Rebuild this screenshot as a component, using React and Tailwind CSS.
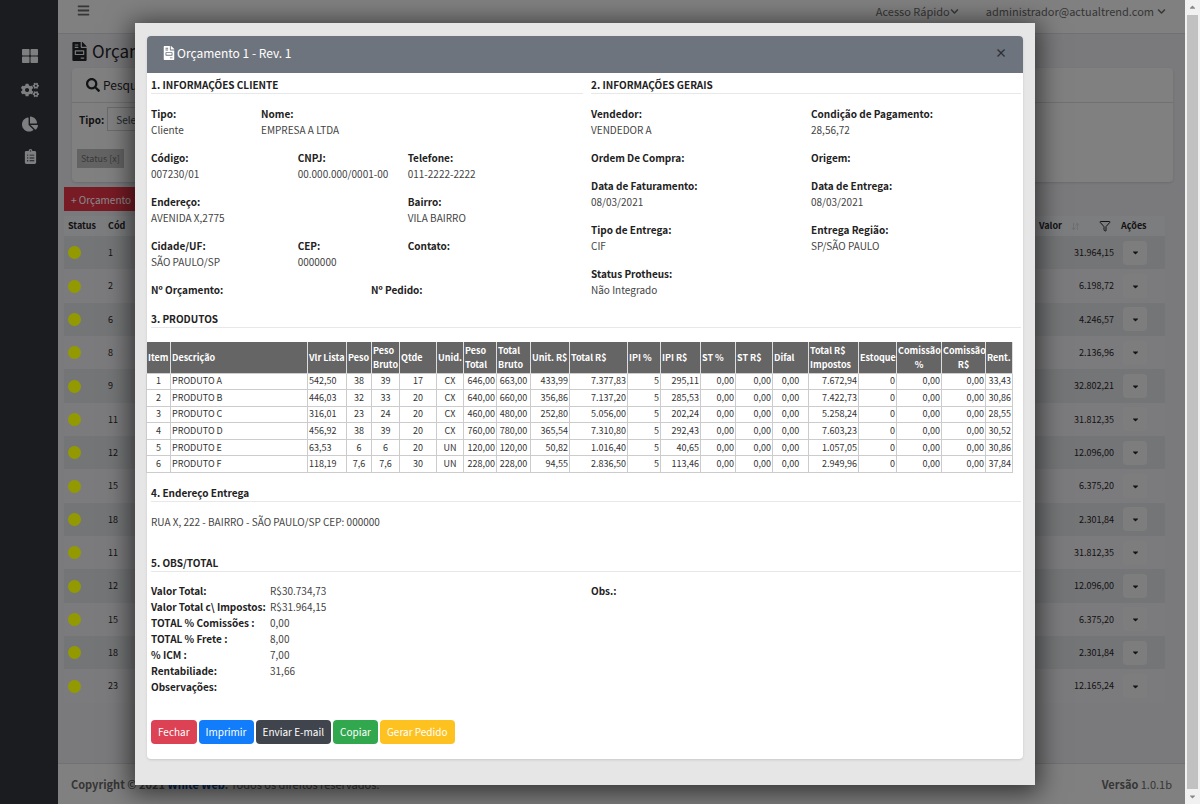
import React from 'react';
import { FaBars, FaChartPie, FaChevronDown, FaClipboardList, FaCogs, FaFileInvoice, FaCaretDown, FaSearch, FaThLarge } from 'react-icons/fa';
import { ArrowDownUp, Filter } from 'lucide-react';

const orcamentos = [
  { cod: 1, valor: '31.964,15' },
  { cod: 2, valor: '6.198,72' },
  { cod: 6, valor: '4.246,57' },
  { cod: 8, valor: '2.136,96' },
  { cod: 9, valor: '32.802,21' },
  { cod: 11, valor: '31.812,35' },
  { cod: 12, valor: '12.096,00' },
  { cod: 15, valor: '6.375,20' },
  { cod: 18, valor: '2.301,84' },
  { cod: 11, valor: '31.812,35' },
  { cod: 12, valor: '12.096,00' },
  { cod: 15, valor: '6.375,20' },
  { cod: 18, valor: '2.301,84' },
  { cod: 23, valor: '12.165,24' },
];

const colunas = [
  { nome: 'Item', col: 'w-[24px]', td: 'text-center' },
  { nome: 'Descrição', col: 'w-[137px]', td: 'text-left' },
  { nome: 'Vlr Lista', col: 'w-[39px]', td: 'text-left' },
  { nome: 'Peso', col: 'w-[25px]', td: 'text-center' },
  { nome: 'Peso Bruto', col: 'w-[28px]', td: 'text-center' },
  { nome: 'Qtde', col: 'w-[37px]', td: 'text-center' },
  { nome: 'Unid.', col: 'w-[27px]', td: 'text-center' },
  { nome: 'Peso Total', col: 'w-[33px]', td: 'text-right' },
  { nome: 'Total Bruto', col: 'w-[34px]', td: 'text-center' },
  { nome: 'Unit. R$', col: 'w-[39px]', td: 'text-right' },
  { nome: 'Total R$', col: 'w-[58px]', td: 'text-right' },
  { nome: 'IPI %', col: 'w-[33px]', td: 'text-right' },
  { nome: 'IPI R$', col: 'w-[40px]', td: 'text-right' },
  { nome: 'ST %', col: 'w-[35px]', td: 'text-right' },
  { nome: 'ST R$', col: 'w-[37px]', td: 'text-right' },
  { nome: 'Difal', col: 'w-[36px]', td: 'text-center' },
  { nome: 'Total R$ Impostos', col: 'w-[50px]', td: 'text-right' },
  { nome: 'Estoque', col: 'w-[38px]', td: 'text-right' },
  { nome: 'Comissão %', col: 'w-[45px]', td: 'text-right', centro: true },
  { nome: 'Comissão R$', col: 'w-[44px]', td: 'text-right', centro: true },
  { nome: 'Rent.', col: 'w-[27px]', td: 'text-right' },
];

const produtos = [
  ['1', 'PRODUTO A', '542,50', '38', '39', '17', 'CX', '646,00', '663,00', '433,99', '7.377,83', '5', '295,11', '0,00', '0,00', '0,00', '7.672,94', '0', '0,00', '0,00', '33,43'],
  ['2', 'PRODUTO B', '446,03', '32', '33', '20', 'CX', '640,00', '660,00', '356,86', '7.137,20', '5', '285,53', '0,00', '0,00', '0,00', '7.422,73', '0', '0,00', '0,00', '30,86'],
  ['3', 'PRODUTO C', '316,01', '23', '24', '20', 'CX', '460,00', '480,00', '252,80', '5.056,00', '5', '202,24', '0,00', '0,00', '0,00', '5.258,24', '0', '0,00', '0,00', '28,55'],
  ['4', 'PRODUTO D', '456,92', '38', '39', '20', 'CX', '760,00', '780,00', '365,54', '7.310,80', '5', '292,43', '0,00', '0,00', '0,00', '7.603,23', '0', '0,00', '0,00', '30,52'],
  ['5', 'PRODUTO E', '63,53', '6', '6', '20', 'UN', '120,00', '120,00', '50,82', '1.016,40', '5', '40,65', '0,00', '0,00', '0,00', '1.057,05', '0', '0,00', '0,00', '30,86'],
  ['6', 'PRODUTO F', '118,19', '7,6', '7,6', '30', 'UN', '228,00', '228,00', '94,55', '2.836,50', '5', '113,46', '0,00', '0,00', '0,00', '2.949,96', '0', '0,00', '0,00', '37,84'],
];

const totais = [
  ['Valor Total:', 'R$30.734,73'],
  ['Valor Total c\\ Impostos:', 'R$31.964,15'],
  ['TOTAL % Comissões :', '0,00'],
  ['TOTAL % Frete :', '8,00'],
  ['% ICM :', '7,00'],
  ['Rentabiliade:', '31,66'],
  ['Observações:', ''],
];

const Campo = ({ label, valor, className = '' }) => (
  <div className={className}>
    <p className="font-bold">{label}</p>
    {valor && <p className="text-[#444]">{valor}</p>}
  </div>
);

const Titulo = ({ children }) => (
  <h2 className="h-5 border-b border-[#e6e8ea] pt-px font-bold leading-[20px]">{children}</h2>
);

const Sidebar = () => (
  <nav className="flex w-[58px] shrink-0 flex-col items-center gap-[17px] bg-[#2d3035] pt-12 pl-[2px] text-[#d2d4d8]">
    <a href="#painel" aria-label="Painel"><FaThLarge size={16} /></a>
    <a href="#cadastros" aria-label="Cadastros"><FaCogs size={18} /></a>
    <a href="#relatorios" aria-label="Relatórios"><FaChartPie size={16} /></a>
    <a href="#pedidos" aria-label="Pedidos"><FaClipboardList size={15} /></a>
  </nav>
);

const Pagina = () => (
  <div className="flex min-w-0 flex-1 flex-col bg-[#cbcccf] text-[#1d2023]">
    <header className="flex h-[34px] shrink-0 items-start justify-between border-b border-[#bbbdc0] bg-[#d5d5d5] pt-[3px] pr-[19px] pl-[19px] text-[11px] leading-[16px] text-[#5a5a5a]">
      <button aria-label="Menu" className="pt-px"><FaBars size={13} /></button>
      <div className="flex gap-[27px]">
        <button className="flex items-center">Acesso Rápido<FaChevronDown size={9} /></button>
        <button className="flex items-center gap-[3px]">administrador@actualtrend.com <FaChevronDown size={9} /></button>
      </div>
    </header>

    <main className="flex-1 overflow-hidden">
      <h1 className="flex h-[34px] items-center gap-[3px] pl-3 text-[17px]">
        <FaFileInvoice size={19} />Orçamentos
      </h1>
      <section className="mr-3 ml-[14px] rounded-sm bg-[#d5d5d5] shadow">
        <h2 className="flex h-[35px] items-center gap-[3px] border-b border-[#bbbdc0] pl-[14px] text-[12px]">
          <FaSearch size={14} />Pesquisa
        </h2>
        <div className="flex h-[79px] flex-col items-start gap-[18px] pt-1 pl-[5px] text-[10px]">
          <div className="flex items-center gap-[3px] pl-[2px]">
            <label htmlFor="tipo" className="font-bold">Tipo:</label>
            <select id="tipo" className="h-6 w-[120px] appearance-none border border-[#b0b4b8] pl-2 text-[#3d444a]">
              <option>Selecione</option>
            </select>
          </div>
          <button className="h-[19px] bg-[#a6a6a6] px-1 text-[9px] leading-[19px] text-[#606060]">Status [x]</button>
        </div>
      </section>

      <div className="pt-[5px] pr-5 pl-[6px]">
        <button className="block h-6 bg-[#c92d3e] px-[7px] text-[10px] text-[#e4e4e4]">+ Orçamento</button>
        <table className="mt-[5px] h-[487px] w-full text-[9px]">
          <thead>
            <tr className="h-5 bg-[#cfd0d2] text-left">
              <th className="w-[44px] pl-1">Status</th>
              <th>Cód</th>
              <th className="w-[60px]">
                <span className="flex items-center gap-[9px]">Valor <ArrowDownUp size={9} className="text-[#b0b0b0]" /></span>
              </th>
              <th className="w-[22px]"><Filter size={12} /></th>
              <th className="w-[44px]">Ações</th>
            </tr>
          </thead>
          <tbody>
            {orcamentos.map((o, i) => (
              <tr key={i} className="odd:bg-[#c2c3c5] even:bg-[#cdced0]">
                <td className="pl-1"><div className="size-[13px] rounded-full bg-[#f6ff00]" /></td>
                <td>{o.cod}</td>
                <td colSpan={2} className="pr-[7px] text-right">{o.valor}</td>
                <td>
                  <button aria-label="Ações" className="ml-[2px] flex size-6 items-center justify-center rounded-sm bg-[#d0d1d2]">
                    <FaCaretDown size={9} />
                  </button>
                </td>
              </tr>
            ))}
          </tbody>
        </table>
      </div>
    </main>

    <footer className="flex h-[41px] shrink-0 items-center justify-between border-t border-[#bbbdc0] bg-[#d5d5d5] pr-[13px] pl-[13px] text-[11px] text-[#5a5a5a]">
      <p><b>Copyright © 2021 <a href="#whiteweb" className="text-[#003e8c]">White Web</a>.</b> Todos os direitos reservados.</p>
      <p><b>Versão</b> 1.0.1b</p>
    </footer>
  </div>
);

const Modal = () => (
  <div role="dialog" aria-label="Orçamento 1 - Rev. 1" className="w-full max-w-[900px] bg-[#e6e6e6] px-3 pt-[13px] pb-[26px] shadow-[0_4px_24px_4px_rgba(0,0,0,0.6)]">
    <div className="rounded bg-white pb-[15px] text-[10px] leading-[16px] text-[#222] shadow-sm">
      <header className="flex h-[37px] items-center justify-between rounded-t bg-[#6e747e] pr-4 pb-[3px] pl-[15px] text-white">
        <h1 className="flex items-center gap-px text-[12px]"><FaFileInvoice size={14} />Orçamento 1 - Rev. 1</h1>
        <button aria-label="Fechar" className="text-[12px] font-bold text-[#2b2f33]">×</button>
      </header>

      <div className="-mr-1 grid grid-cols-2 pt-px">
        <section className="px-1">
          <Titulo>1. INFORMAÇÕES CLIENTE</Titulo>
          <div className="mt-3 -mr-1 -ml-1 grid grid-cols-12 gap-y-3">
            <Campo className="col-span-3 pl-1" label="Tipo:" valor="Cliente" />
            <Campo className="col-span-9 pl-1" label="Nome:" valor="EMPRESA A LTDA" />
            <Campo className="col-span-4 pl-1" label="Código:" valor="007230/01" />
            <Campo className="col-span-3 pl-1" label="CNPJ:" valor="00.000.000/0001-00" />
            <Campo className="col-span-5 pl-1" label="Telefone:" valor="011-2222-2222" />
            <Campo className="col-span-7 pl-1" label="Endereço:" valor="AVENIDA X,2775" />
            <Campo className="col-span-5 pl-1" label="Bairro:" valor="VILA BAIRRO" />
            <Campo className="col-span-4 pl-1" label="Cidade/UF:" valor="SÃO PAULO/SP" />
            <Campo className="col-span-3 pl-1" label="CEP:" valor="0000000" />
            <Campo className="col-span-5 pl-1" label="Contato:" />
            <Campo className="col-span-6 pl-1" label="Nº Orçamento:" />
            <Campo className="col-span-6 pl-1" label="Nº Pedido:" />
          </div>
        </section>
        <section className="pr-[6px] pl-1">
          <Titulo>2. INFORMAÇÕES GERAIS</Titulo>
          <div className="mt-3 -mr-[10px] grid grid-cols-2 gap-y-3">
            <Campo label="Vendedor:" valor="VENDEDOR A" />
            <Campo label="Condição de Pagamento:" valor="28,56,72" />
            <Campo label="Ordem De Compra:" />
            <Campo label="Origem:" />
            <Campo label="Data de Faturamento:" valor="08/03/2021" />
            <Campo label="Data de Entrega:" valor="08/03/2021" />
            <Campo label="Tipo de Entrega:" valor="CIF" />
            <Campo label="Entrega Região:" valor="SP/SÃO PAULO" />
            <Campo label="Status Protheus:" valor="Não Integrado" />
          </div>
        </section>
      </div>

      <section className="mt-[10px]">
        <div className="pr-[2px] pl-1"><Titulo>3. PRODUTOS</Titulo></div>
        <div className="mt-[14px] -ml-px pr-[10px]">
          <table className="h-[131px] w-full table-fixed border-collapse text-[9px] leading-[14px]">
            <colgroup>
              {colunas.map((c) => <col key={c.nome} className={c.col} />)}
            </colgroup>
            <thead>
              <tr className="h-[31px] bg-[#656565] text-white">
                {colunas.map((c) => (
                  <th key={c.nome} className={`border-x border-[#ddd] px-px pt-px ${c.centro ? 'text-center' : 'text-left'}`}>{c.nome}</th>
                ))}
              </tr>
            </thead>
            <tbody>
              {produtos.map((p) => (
                <tr key={p[0]}>
                  {p.map((v, i) => (
                    <td key={i} className={`border border-[#ccc] px-px text-[#333] ${colunas[i].td}`}>{v}</td>
                  ))}
                </tr>
              ))}
            </tbody>
          </table>
        </div>
      </section>

      <section className="mt-[9px] pr-[2px] pl-1">
        <Titulo>4. Endereço Entrega</Titulo>
        <p className="mt-3 text-[#444]">RUA X, 222 - BAIRRO - SÃO PAULO/SP CEP: 000000</p>
      </section>

      <section className="mt-[22px] pr-[2px] pl-1">
        <Titulo>5. OBS/TOTAL</Titulo>
        <div className="mt-[11px] -mr-[10px] grid grid-cols-2">
          <dl className="grid grid-cols-[119px_1fr] content-start">
            {totais.map(([label, valor]) => (
              <React.Fragment key={label}>
                <dt className="font-bold whitespace-nowrap">{label}</dt>
                <dd className="text-[#444]">{valor}</dd>
              </React.Fragment>
            ))}
          </dl>
          <p className="font-bold">Obs.:</p>
        </div>
      </section>

      <div className="mt-[25px] flex gap-[2px] pl-1 text-white">
        <button className="h-6 rounded-sm bg-[#dc4254] px-[7px]">Fechar</button>
        <button className="h-6 rounded-sm bg-[#117dfb] px-[7px]">Imprimir</button>
        <button className="h-6 rounded-sm bg-[#3f444d] px-[7px]">Enviar E-mail</button>
        <button className="h-6 rounded-sm bg-[#31a84d] px-[7px]">Copiar</button>
        <button className="h-6 rounded-sm bg-[#fdc220] px-[7px]">Gerar Pedido</button>
      </div>
    </div>
  </div>
);

const App = () => {
  return (
    <div className="flex h-screen overflow-hidden font-['Noto_Sans_CJK_JP',sans-serif]">
      <div className="relative flex min-w-0 flex-1">
        <Sidebar />
        <Pagina />
        {/* Backdrop */}
        <div className="absolute inset-0 flex items-start justify-center bg-black/40 pt-[23px] pr-[15px]">
          <Modal />
        </div>
      </div>

      {/* Scrollbar */}
      <div className="flex w-[15px] shrink-0 flex-col items-center bg-[#f1f1f1] text-[#888]">
        <FaCaretDown size={9} className="my-[3px] rotate-180" />
        <div className="w-[11px] flex-1 bg-[#c1c1c1]" />
        <FaCaretDown size={9} className="my-[3px]" />
      </div>
    </div>
  );
};

export default App;
